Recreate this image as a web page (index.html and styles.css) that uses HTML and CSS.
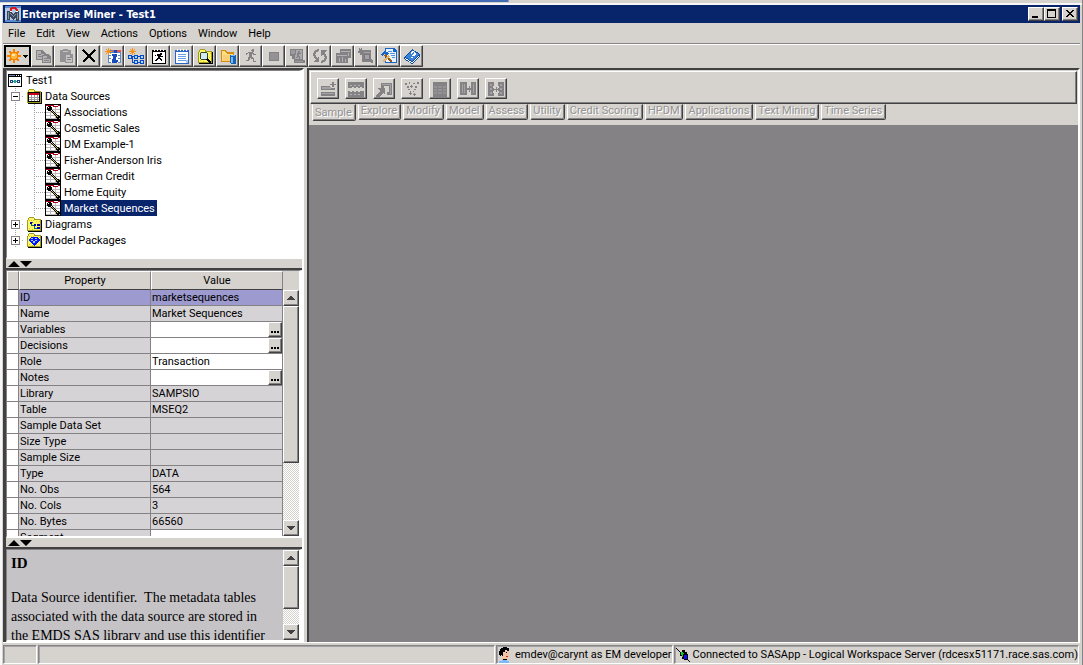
FILE: index.html
```html
<!DOCTYPE html>
<html lang="en">
<head>
<meta charset="utf-8">
<title>Enterprise Miner - Test1</title>
<link rel="stylesheet" href="styles.css">
</head>
<body>
<svg class="defs" aria-hidden="true">
  <symbol id="source" viewBox="0 0 16 16"><path fill="#000" d="M0 0h16v16H0z"/><path fill="#fff" d="M1 1h14v14H1z"/><path fill="#bdbabd" d="M1 5h14v1H1zM1 8h14v1H1zM1 11h14v1H1zM1 14h14v1H1zM5 3h1v12H5zM10 3h1v12h-1z"/><path fill="#b50018" d="M1 1h8v1H1zM8 2h5v1H8zM13 1h2v1h-2z"/><path fill="#000" d="M3 2h3v1h1v3H6v1H3V6H2V3h1zM7 6h1v1h1v1h1v1h1v1h1v1h2v1h1v2h-1v1h-2v-1h-1v-2h-1v-1H9v-1H8V9H7V8H6V7h1z"/><path fill="#fff" d="M3 3h1v1H3z"/><path fill="#cec342" d="M7 7h1v1h1v1h1v1h1v1h1v1h1v1h-1v-1h-1v-1h-1v-1H9v-1H8V8H7z"/></symbol>
  <symbol id="folder" viewBox="0 0 16 16"><path fill="#9c9a21" d="M1 4h1V2h1V1h5v1h1v1h6v1h1v11H1z"/><path fill="#fff763" d="M2 4h1V2h5v2h6v10H2z"/><path fill="#efc321" d="M3 4h1v1H3zM5 4h1v1H5zM7 4h1v1H7zM10 5h1v1h-1zM13 5h1v1h-1zM3 12h1v1H3zM6 13h1v1H6zM10 12h1v1h-1zM12 9h1v1h-1z"/><path d="M15 4h1v12H2v-1h13z"/></symbol>
  <symbol id="up" viewBox="0 0 8 4"><path fill="#424142" d="M3 0h2v1h1v1h1v1h1v1H0V3h1V2h1V1h1z"/></symbol>
  <symbol id="down" viewBox="0 0 8 4"><path fill="#424142" d="M0 0h8v1H7v1H6v1H5v1H3V3H2V2H1V1H0z"/></symbol>
</svg>
<div class="window">
  <div class="backdrop"></div>
  <header class="titlebar">
    <svg class="logo" viewBox="0 0 16 16"><path fill="#b5c7de" d="M0 0h16v16H0z"/><path fill="#5a8ace" d="M0 0h16v2H0zM0 14h16v2H0z"/><path fill="#39455a" d="M2 14V5h3l3 3 3-3h3v10h-3v-4l-3 3-3-3v3z"/><path fill="#8492a5" d="M3 6h1v7H3zM5 7l3 3 3-3v1l-3 3-3-3zM12 7h1v6h-1z"/><path fill="none" stroke="#d61821" stroke-width="2" d="M6 5V3l1-1h3l2 2v2"/><path fill="#fff" d="M5 5h2v1H5zM11 5h2v1h-2z"/></svg>
    <h1>Enterprise Miner - Test1</h1>
    <button class="bevel" aria-label="Minimize"><svg viewBox="0 0 12 10"><path d="M2 7h6v2H2z"/></svg></button>
    <button class="bevel" aria-label="Maximize"><svg viewBox="0 0 12 10"><path fill-rule="evenodd" d="M1 0h9v9H1zM2 2v6h7V2z"/></svg></button>
    <button class="bevel close" aria-label="Close"><svg viewBox="0 0 12 10"><path d="M2 1h2v1h1v1h2V2h1V1h2v1H9v1H8v1H7v1h1v1h1v1h1v1H8V7H7V6H5v1H4v1H2V7h1V6h1V5h1V4H4V3H3V2H2z"/></svg></button>
  </header>
  <nav class="menu">
    <button>File</button><button>Edit</button><button>View</button><button>Actions</button><button>Options</button><button>Window</button><button>Help</button>
  </nav>
  <div class="toolbar">
    <button class="new" aria-label="New"><svg class="wide" viewBox="0 0 23 16"><path fill="#f78200" d="M7 1h2v3h2V3h2v2h-1v2h3v2h-3v2h1v2h-2v-1H9v3H7v-3H5v1H3v-2h1V9H1V7h3V5H3V3h2v1h2z"/><path fill="#ffba42" d="M6 5h4v1h1v4h-1v1H6v-1H5V6h1z"/><path fill="#ffe7ad" d="M6 6h3v2H6z"/><path d="M17 7h5v1h-1v1h-1v1h-1V9h-1V8h-1z"/></svg></button>
    <button class="bevel" disabled aria-label="Copy"><svg viewBox="0 0 16 16"><path fill="#848284" d="M1 2h6l3 3h1v1h2l3 3v6H7v-3H1z"/><path fill="#b5b2b5" d="M2 3h4v3h3v1H7v4H2zM8 8h4v3h3v3H8z"/><path fill="#848284" d="M3 6h3v1H3zM3 8h4v1H3zM9 10h3v1H9zM9 12h5v1H9z"/></svg></button>
    <button class="bevel" disabled aria-label="Paste"><svg viewBox="0 0 16 16"><path fill="#949294" d="M2 2h3V1h5v1h3v4h2v9H7v-1H2z"/><path fill="#c6c3c6" d="M5 3h5v1H5zM8 7h4v3h2v4H8z"/><path fill="#848284" d="M9 9h3v1H9zM9 11h4v1H9z"/></svg></button>
    <button class="bevel" aria-label="Delete"><svg viewBox="0 0 16 16"><path fill="none" stroke="#000" stroke-width="2" d="M2 2l12 12M14 2L2 14"/></svg></button>
    <button class="bevel gap" aria-label="Create data source"><svg viewBox="0 0 16 16"><path fill="#5a8ac6" d="M3 2h13v13H3z"/><path fill="#fff" d="M4 5h2v2H4zM7 5h3v2H7zM12 5h3v2h-3zM4 8h2v2H4zM13 8h2v2h-2zM4 11h2v3H4zM7 11h2v3H7zM13 11h2v3h-2z"/><path fill="#ef5142" d="M8 2h8v2H8z"/><path fill="#fff" d="M6 5h7v10H6z"/><path fill="#1849bd" d="M9 2h3v3H9zM7 6h5l-1 6h2v1l-2 2H7l1-7H7z"/><path fill="#f79218" d="M3 0h1v2h1V1h1v1H5v1h2v1H5v1h1v1H5V5H4v2H3V5H2v1H1V5h1V4H0V3h2V2H1V1h1v1h1z"/></svg></button>
    <button class="bevel" aria-label="Create diagram"><svg viewBox="0 0 16 16"><path fill="#084ac6" d="M0 7h4v4H0zM6 7h4v4H6zM12 7h4v4h-4zM6 12h4v4H6zM12 12h4v4h-4zM4 8h2v1H4zM10 8h2v1h-2zM10 14h2v1h-2zM4 9h1v5h2v1H4z"/><path fill="#b5d7f7" d="M1 8h2v2H1zM7 8h2v2H7zM13 8h2v2h-2zM7 13h2v2H7zM13 13h2v2h-2z"/><path fill="#f79218" d="M4 0h1v2h1V1h1v1H6v1h2v1H6v1h1v1H6V5H5v2H4V5H3v1H2V5h1V4H1V3h2V2H2V1h1v1h1z"/></svg></button>
    <button class="bevel" aria-label="Run status"><svg viewBox="0 0 16 16"><path d="M1 2h14v14H1z"/><path fill="#fff" d="M2 4h12v11H2z"/><path fill="#fff" d="M3 1h1v2H3zM6 1h1v2H6zM9 1h1v2H9zM12 1h1v2h-1z"/><path d="M9 5h2v2H9zM6 6h3v1h1v1h2v1H9v1h1v1h1v2h-1v-1H9v-1H7v1H6v1H4v-1h1v-1h1v-1h1V8H6V7H5v1H4V7h2z"/></svg></button>
    <button class="bevel" aria-label="View log"><svg viewBox="0 0 16 16"><path fill="#2965c6" d="M1 2h14v14H1z"/><path fill="#fff" d="M2 4h12v11H2zM3 1h1v2H3zM6 1h1v2H6zM9 1h1v2H9zM12 1h1v2h-1z"/><path fill="#6ba2e7" d="M4 6h8v1H4zM4 8h8v1H4zM4 10h8v1H4zM4 12h8v1H4z"/><path fill="#a5c7ef" d="M12 12h2v3h-2z"/></svg></button>
    <button class="bevel" aria-label="Explore"><svg viewBox="0 0 16 16"><use href="#folder"/><circle cx="7" cy="8" r="4" fill="#d6ebef" stroke="#294939"/><path stroke="#000" stroke-width="2" d="M10 11l4 4"/></svg></button>
    <button class="bevel" aria-label="Open project"><svg viewBox="0 0 16 16"><path fill="#d68a10" d="M1 2h5l1 2h7v10H1z"/><path fill="#ffdf84" d="M2 3h3l2 3h6v7H2z"/><path fill="#ffcf73" d="M3 7h11v6H3z"/><path fill="#1861b5" d="M10 7h6v8l-1 1h-4l-1-1z"/><path fill="#73bef7" d="M11 7h4v1h-4zM11 9h2v6h-2z"/></svg></button>
    <button class="bevel" disabled aria-label="Run"><svg viewBox="0 0 16 16"><path fill="#848284" d="M9 1h2v3H9V3H8V2h1zM5 4h5v1h1v1h2v1h-3V6H9v3h1v1h1v3h2v1h-3v-3H8v-1H7v2H6v1H3v-1h2V9h1V5H5v1H4v1H3V5h2z"/></svg></button>
    <button class="bevel" disabled aria-label="Stop"><svg viewBox="0 0 16 16"><path fill="#848284" d="M3 4h10v9H3z"/><path fill="#949294" d="M4 5h8v7H4z"/></svg></button>
    <button class="bevel" disabled aria-label="Results"><svg viewBox="0 0 16 16"><path fill="#848284" d="M1 1h13v11h2v3H5v-4H3V8H1z"/><path fill="#adaaad" d="M7 2h6v9H6V7h1z"/><path fill="#848284" d="M9 3h2v2H9zM8 5h4v1h-2v2h1v3h-1V9H9v1H7V9h1z"/><path fill="#9c9a9c" d="M2 2h4v4H2zM6 13h8v1H6z"/></svg></button>
    <button class="bevel" disabled aria-label="Refresh"><svg viewBox="0 0 16 16"><path fill="none" stroke="#848284" stroke-width="2" d="M7 2L4 3 2 6l1 3 3 3M9 14l3-1 2-3-1-3-2-2"/><path fill="#848284" d="M7 8v6H1zM9 2h6L9 8z"/></svg></button>
    <button class="bevel" disabled aria-label="Model comparison"><svg viewBox="0 0 16 16"><path fill="#848284" d="M5 1h11v9h-3v5H1V5h4z"/><path fill="#b5b2b5" d="M6 3h9v1H6zM2 7h10v1H2z"/><path fill="#b5b2b5" d="M4 10h1v4H4zM7 9h1v5H7zM10 11h1v3h-1zM13 5h1v3h-1z"/></svg></button>
    <button class="bevel" disabled aria-label="Find"><svg viewBox="0 0 16 16"><path fill="#848284" d="M1 0h1v1h1V0h1v2h9v9l2 2v2h-2l-1-1H4V7H2V5H0V3h1z"/><path fill="#a5a2a5" d="M6 4h6v1H6zM6 6h2v1H6z"/><circle cx="9" cy="9" r="3" fill="#a5a2a5" stroke="#7b797b"/></svg></button>
    <button class="bevel" aria-label="Options"><svg viewBox="0 0 16 16"><path fill="#1863c6" d="M4 0h9l3 3v12H4z"/><path fill="#e7f3ff" d="M5 1h7v3h3v10H5z"/><path fill="#5292de" d="M7 3h4v1H7zM9 5h5v1H9zM10 7h4v1h-4zM11 9h3v1h-3z"/><path fill="#1863c6" d="M0 6l4-3 4 2-2 2-2-1-3 2z"/><path stroke="#945918" stroke-width="2" d="M4 7l7 7"/><path stroke="#e7b263" stroke-width="2" d="M2 14l6-6"/></svg></button>
    <button class="bevel" aria-label="Help"><svg viewBox="0 0 16 16"><path fill="#10499c" d="M0 9l8-8 8 5v3l-8 7-8-5z"/><path fill="#3982d6" d="M1 9l7-7 7 4-7 7z"/><path fill="#fff" d="M1 10l7 4 7-6v1l-7 6-7-4z"/><path fill="#fff" d="M6 5l3-2 3 2v2L9 8H8V7l2-1V5L9 4 7 6zM7 9h2v1H7z"/></svg></button>
  </div>
  <main class="work">
    <aside class="side">
      <section class="pane tree" aria-label="Project">
        <div class="row root"><svg class="i14" viewBox="0 0 14 14"><path d="M0 1h14v13H0z"/><path fill="#fff" d="M1 4h12v9H1zM8 2h1v1H8zM10 2h1v1h-1zM12 2h1v1h-1z"/><path fill="#5a82bd" d="M1 2h6v1H1z"/><path fill="#184584" d="M2 7h3v3H2zM9 7h3v3H9z"/><path fill="#29a294" d="M5 8h4v1H5zM6 7h2v3H6z"/><path fill="#fff" d="M3 8h1v1H3zM10 8h1v1h-1z"/></svg><span>Test1</span></div>
        <ul class="level1">
          <li><div class="row"><button class="toggle" aria-label="Collapse Data Sources"><svg viewBox="0 0 9 9"><path fill="#848284" d="M0 0h9v9H0z"/><path fill="#fff" d="M1 1h7v7H1z"/><path d="M2 4h5v1H2z"/></svg></button><svg class="i16" viewBox="0 0 16 16"><use href="#folder"/><path d="M2 4h12v10H2z"/><path fill="#fff" d="M3 7h10v6H3z"/><path fill="#c60018" d="M3 5h10v2H3z"/><path fill="#9c9a9c" d="M3 9h10v1H3zM3 11h10v1H3zM5 7h1v6H5zM8 7h1v6H8zM11 7h1v6h-1z"/></svg><span>Data Sources</span></div>
            <ul class="level2">
              <li class="row"><svg class="i16"><use href="#source"/></svg><span>Associations</span></li>
              <li class="row"><svg class="i16"><use href="#source"/></svg><span>Cosmetic Sales</span></li>
              <li class="row"><svg class="i16"><use href="#source"/></svg><span>DM Example-1</span></li>
              <li class="row"><svg class="i16"><use href="#source"/></svg><span>Fisher-Anderson Iris</span></li>
              <li class="row"><svg class="i16"><use href="#source"/></svg><span>German Credit</span></li>
              <li class="row"><svg class="i16"><use href="#source"/></svg><span>Home Equity</span></li>
              <li class="row"><svg class="i16"><use href="#source"/></svg><span class="selected">Market Sequences</span></li>
            </ul>
          </li>
          <li class="row"><button class="toggle" aria-label="Expand Diagrams"><svg viewBox="0 0 9 9"><path fill="#848284" d="M0 0h9v9H0z"/><path fill="#fff" d="M1 1h7v7H1z"/><path d="M2 4h5v1H2zM4 2h1v5H4z"/></svg></button><svg class="i16" viewBox="0 0 16 16"><use href="#folder"/><path fill="#0000ad" d="M4 6h2v2H4zM8 8h2v2H8zM11 8h3v2h-3zM11 11h3v2h-3z"/><path fill="#007573" d="M6 6h1v1H6zM5 8h1v1h2v1H5zM8 10h1v2h2v1H8z"/></svg><span>Diagrams</span></li>
          <li class="row"><button class="toggle" aria-label="Expand Model Packages"><svg viewBox="0 0 9 9"><path fill="#848284" d="M0 0h9v9H0z"/><path fill="#fff" d="M1 1h7v7H1z"/><path d="M2 4h5v1H2zM4 2h1v5H4z"/></svg></button><svg class="i16" viewBox="0 0 16 16"><use href="#folder"/><path fill="#0018ff" d="M5 5h6l3 3-6 6-6-6z"/><path fill="#a5c7ff" d="M5 6h2v1H5zM9 6h2v1H9zM5 8h2v1H5zM9 8h2v1H9zM7 9h2v2H7z"/></svg><span>Model Packages</span></li>
        </ul>
      </section>
      <div class="splitter"><svg viewBox="0 0 24 6"><path d="M0 6l6-6 6 6zM12 0h12l-6 6z"/></svg></div>
      <section class="pane props" aria-label="Properties">
        <div class="clip">
          <table>
            <colgroup><col class="c-mark"><col class="c-name"><col></colgroup>
            <thead><tr><th></th><th>Property</th><th>Value</th></tr></thead>
            <tbody>
              <tr class="current"><td></td><td>ID</td><td>marketsequences</td></tr>
              <tr><td></td><td>Name</td><td>Market Sequences</td></tr>
              <tr class="edit"><td></td><td>Variables</td><td class="act"><button class="bevel more" aria-label="Edit variables"><svg viewBox="0 0 8 2"><path d="M0 0h2v2H0zM3 0h2v2H3zM6 0h2v2H6z"/></svg></button></td></tr>
              <tr class="edit"><td></td><td>Decisions</td><td class="act"><button class="bevel more" aria-label="Edit decisions"><svg viewBox="0 0 8 2"><path d="M0 0h2v2H0zM3 0h2v2H3zM6 0h2v2H6z"/></svg></button></td></tr>
              <tr class="edit"><td></td><td>Role</td><td>Transaction</td></tr>
              <tr class="edit"><td></td><td>Notes</td><td class="act"><button class="bevel more" aria-label="Edit notes"><svg viewBox="0 0 8 2"><path d="M0 0h2v2H0zM3 0h2v2H3zM6 0h2v2H6z"/></svg></button></td></tr>
              <tr><td></td><td>Library</td><td>SAMPSIO</td></tr>
              <tr><td></td><td>Table</td><td>MSEQ2</td></tr>
              <tr><td></td><td>Sample Data Set</td><td></td></tr>
              <tr><td></td><td>Size Type</td><td></td></tr>
              <tr><td></td><td>Sample Size</td><td></td></tr>
              <tr><td></td><td>Type</td><td>DATA</td></tr>
              <tr><td></td><td>No. Obs</td><td>564</td></tr>
              <tr><td></td><td>No. Cols</td><td>3</td></tr>
              <tr><td></td><td>No. Bytes</td><td>66560</td></tr>
              <tr class="edit"><td></td><td>Segment</td><td></td></tr>
            </tbody>
          </table>
        </div>
        <div class="scroll under-head"><button class="bevel" aria-label="Scroll properties up"><svg><use href="#up"/></svg></button><div class="thumb bevel"></div><div class="track"></div><button class="bevel" aria-label="Scroll properties down"><svg><use href="#down"/></svg></button></div>
      </section>
      <div class="splitter"><svg viewBox="0 0 24 6"><path d="M0 6l6-6 6 6zM12 0h12l-6 6z"/></svg></div>
      <section class="pane help" aria-label="Property help">
        <div class="clip"><h2>ID</h2><p>Data Source identifier.&nbsp; The metadata tables associated with the data source are stored in the EMDS SAS library and use this identifier</p></div>
        <div class="scroll"><button class="bevel" aria-label="Scroll help up"><svg><use href="#up"/></svg></button><div class="thumb bevel"></div><div class="track"></div><button class="bevel" aria-label="Scroll help down"><svg><use href="#down"/></svg></button></div>
      </section>
    </aside>
    <section class="desk">
      <div class="palette">
        <div class="nodes">
          <button class="bevel" disabled aria-label="Append"><svg viewBox="0 0 16 16"><path fill="#848284" d="M1 5h9v4H1zM1 11h14v4H1zM10 3h6v1h-6zM12 1h2v5h-2zM10 7h5v2h-5z"/><path fill="#a5a2a5" d="M2 6h9v2H2zM2 12h12v1H2z"/></svg></button>
          <button class="bevel" disabled aria-label="Data Partition"><svg viewBox="0 0 16 16"><path fill="#848284" d="M0 1h16v6h-2V6h-2v1h-2V6H8v1H6V6H4v1H0zM0 10h2v1h2v-1h2v1h2v-1h2v1h2v-1h4v6H0z"/><path fill="#b5b2b5" d="M2 4h2v1H2zM6 4h2v1H6zM10 4h2v1h-2zM2 13h2v1H2zM6 13h2v1H6zM10 13h2v1h-2z"/></svg></button>
          <button class="bevel" disabled aria-label="File Import"><svg viewBox="0 0 16 16"><path fill="#848284" d="M5 2h11v12h-5v-3h2V5H8v3H5z"/><path fill="#a5a2a5" d="M6 3h9v10h-1V4H6z"/><path fill="#848284" d="M2 7h7v7l-2-2-3 4H0v-2l4-4z"/></svg></button>
          <button class="bevel" disabled aria-label="Filter"><svg viewBox="0 0 16 16"><path fill="#848284" d="M1 2h2v2H1zM5 1h1v2H5zM9 2h2v1H9zM13 1h2v2h-2zM3 5h2v2H3zM7 4h1v3H7zM6 5h3v1H6zM11 5h2v2h-2zM4 8h2v1H4zM10 8h2v1h-2zM6 10h1v1H6zM9 10h1v1H9zM5 12h3v1H5zM6 11h1v3H6zM9 13h3v1H9zM10 12h1v3h-1z"/></svg></button>
          <button class="bevel" disabled aria-label="Input Data"><svg viewBox="0 0 16 16"><path fill="#848284" d="M1 1h14v15H1z"/><path fill="#949294" d="M2 5h3v2H2zM6 5h4v2H6zM11 5h3v2h-3zM2 8h3v2H2zM6 8h4v2H6zM11 8h3v2h-3zM2 11h3v2H2zM6 11h4v2H6zM11 11h3v2h-3z"/></svg></button>
          <button class="bevel" disabled aria-label="Merge"><svg viewBox="0 0 16 16"><path fill="#848284" d="M0 1h7v13H0zM11 1h5v13h-5zM7 7h4v2H7zM9 5h1v6H9z"/><path fill="#a5a2a5" d="M2 3h1v9H2zM4 3h1v9H4zM13 3h1v9h-1z"/></svg></button>
          <button class="bevel" disabled aria-label="Sample"><svg viewBox="0 0 16 16"><path fill="#848284" d="M0 1h6v4H5v2h1v3H5v2h1v3H0zM10 1h6v14h-6v-3h1v-2h-1V7h1V5h-1zM5 8h6v1H5zM8 6h1v5H8z"/><path fill="#a5a2a5" d="M2 3h2v2H2zM2 7h2v2H2zM2 11h2v2H2zM12 3h2v2h-2zM12 7h2v2h-2zM12 11h2v2h-2z"/></svg></button>
        </div>
        <div class="tabs" role="tablist">
          <button role="tab" disabled class="active">Sample</button><button role="tab" disabled>Explore</button><button role="tab" disabled>Modify</button><button role="tab" disabled>Model</button><button role="tab" disabled>Assess</button><button role="tab" disabled>Utility</button><button role="tab" disabled>Credit Scoring</button><button role="tab" disabled>HPDM</button><button role="tab" disabled>Applications</button><button role="tab" disabled>Text Mining</button><button role="tab" disabled>Time Series</button>
        </div>
      </div>
      <div class="canvas"></div>
    </section>
  </main>
  <footer class="status">
    <div class="cell small"></div>
    <div class="cell grow"></div>
    <div class="cell user"><svg class="i16" viewBox="0 0 16 16"><path fill="#7bbaff" d="M2 14h3v-2h5v2h2v2H2z"/><path fill="#efc7a5" d="M5 4h7v6h-1v3H5z"/><path d="M3 2h1V1h2V0h4v1h2v3h-2V3H8v2H6v4H5V8H4v1H3V8H2V4h1z"/><path fill="#c63118" d="M9 9h2v1H9z"/><path d="M9 5h1v1H9zM6 12h4v1H6z"/></svg><span>emdev@carynt as EM developer</span></div>
    <div class="cell server"><svg class="i16" viewBox="0 0 16 16"><path stroke="#000" fill="none" d="M1 1l5 5M11 11l4 4"/><path d="M7 3h3v2h2v2h1v6H9v-1H7V9H5V5h2z"/><path fill="#00d721" d="M6 5h2v1h1v1H8v3H7V8H6z"/><path fill="#1010ef" d="M9 8h3v4H9z"/></svg><span>Connected to SASApp - Logical Workspace Server (rdcesx51171.race.sas.com)</span></div>
  </footer>
</div>
</body>
</html>
```
FILE: styles.css
```css
* { box-sizing: border-box; }
body {
  margin: 0;
  background: #d6d3ce;
  color: #000;
  font: 11px/16px Roboto, "Noto Sans", sans-serif;
}
button {
  margin: 0;
  padding: 0;
  border: 0;
  background: #d6d3ce;
  color: inherit;
  font: inherit;
}
h1, h2, p, ul { margin: 0; padding: 0; }
ul { list-style: none; }
svg { display: block; flex: none; shape-rendering: crispEdges; }
.defs { position: absolute; width: 0; height: 0; }
.i16 { width: 16px; height: 16px; }
.i14 { width: 14px; height: 14px; }
.bevel {
  display: flex;
  align-items: center;
  justify-content: center;
  background: #d6d3ce;
  border: 1px solid;
  border-color: #fff #424142 #424142 #fff;
  box-shadow: inset -1px -1px #848284;
}

.window {
  display: flex;
  flex-direction: column;
  height: 100vh;
  padding: 0 2px 0 3px;
  border-right: 1px solid #848284;
  box-shadow: inset 2px 0 #f7f7f7;
}
.backdrop {
  height: 5px;
  margin: 0 -2px 0 -3px;
  background: linear-gradient(#426db5, #426db5) 0 0 / 47% 2px no-repeat, #d6d3ce;
  border-bottom: 2px solid #f7f7f7;
}
.titlebar {
  display: flex;
  align-items: center;
  height: 18px;
  padding: 0 2px;
  background: #08246b;
  color: #fff;
}
.logo { width: 16px; height: 16px; }
.titlebar h1 { flex: 1; padding: 1px 0 0 1px; font: bold 11px/16px "DejaVu Sans Condensed", sans-serif; }
.titlebar button { width: 16px; height: 14px; }
.titlebar button svg { width: 12px; height: 10px; }
.titlebar .close { margin-left: 2px; }

.menu {
  display: flex;
  height: 22px;
  padding: 2px 0;
  border-bottom: 1px solid #fff;
  box-shadow: inset 0 -1px #848284;
}
.menu button { padding: 0 6px 0 5px; line-height: 16px; background: none; }

.toolbar { display: flex; height: 23px; padding: 0 1px; }
.toolbar button { width: 23px; height: 22px; }
.toolbar svg { width: 16px; height: 16px; }
.toolbar .new { width: 27px; border: 2px solid #000; }
.toolbar .new .wide { width: 23px; }
.toolbar .gap { margin-left: 1px; }

.work { display: flex; flex: 1; min-height: 0; }
.side {
  display: flex;
  flex-direction: column;
  width: 301px;
  border-left: 3px solid #424142;
  border-top: 2px solid #424142;
  border-right: 2px solid #fff;
}
.pane { border: 3px solid #fff; border-top-color: #848284; border-left-color: #848284; border-width: 1px 3px 2px 1px; }
.tree { height: 189px; padding: 1px; background: #fff; }
.row { display: flex; align-items: center; height: 16px; white-space: nowrap; }
.row span { padding: 1px 2px 0 3px; line-height: 15px; }
.root span { padding-left: 4px; }
.level1 { margin-left: 7px; background: linear-gradient(#a5a2a5 50%, transparent 0) 0 0 / 1px 2px repeat-y; }
.level1 > li { margin-left: -4px; }
.level1 .row .toggle { width: 9px; height: 9px; margin-right: 6px; background: #fff; box-shadow: 7px 0 0 -4px #a5a2a5; }
.toggle svg { width: 9px; height: 9px; }
.level2 { margin-left: 23px; background: linear-gradient(#a5a2a5 50%, transparent 0) 0 0 / 1px 2px repeat-y; }
.level2 .row {
  padding-left: 11px;
  background: repeating-linear-gradient(90deg, #a5a2a5 0 1px, transparent 1px 2px) 0 8px / 11px 1px no-repeat;
}
.level2 .row .selected { background: #08246b; color: #fff; }

.splitter { display: flex; align-items: center; height: 11px; padding-left: 2px; border-bottom: 2px solid #424142; }
.splitter svg { width: 24px; height: 6px; shape-rendering: auto; }

.props { display: flex; flex: 1; min-height: 0; background: #d6d3ce; }
.clip { flex: 1; min-width: 0; overflow: hidden; }
table { width: 100%; table-layout: fixed; border-collapse: separate; border-spacing: 0; }
.c-mark { width: 12px; }
.c-name { width: 132px; }
th {
  height: 19px;
  padding: 1px 0 0;
  border: 1px solid;
  border-color: #fff #848284 #424142 #fff;
  font-weight: normal;
  line-height: 16px;
}
td {
  height: 16px;
  padding: 1px 1px 0;
  border-right: 1px solid #848284;
  border-bottom: 1px solid #848284;
  background: #d6d3d6;
  line-height: 14px;
}
td:first-child, .edit td:last-child { background: #fff; }
.current td:nth-child(n+2) { background: #9c9ace; }
.act { padding: 0; }
.more { width: 14px; height: 15px; margin-left: auto; padding-top: 5px; }
.more svg { width: 8px; height: 2px; }

.scroll { display: flex; flex-direction: column; width: 16px; background: #d6d3ce; }
.scroll button { height: 16px; }
.scroll svg { width: 8px; height: 4px; }
.track { flex: 1; background: repeating-conic-gradient(#fff 0 25%, #d6d3ce 0 50%) 0 0 / 2px 2px; }
.under-head { padding-top: 19px; }
.under-head .thumb { flex: 0 0 64%; }

.help { display: flex; height: 93px; background: #c6c3c6; font: 14px/19px "Liberation Serif", serif; }
.help h2 { padding: 4px 4px 0; font-size: 15px; line-height: 19px; }
.help p { padding: 15px 14px 0 4px; }
.help .thumb { height: 43px; }

.desk {
  display: flex;
  flex: 1;
  flex-direction: column;
  min-width: 0;
  margin-left: 3px;
  border-left: 2px solid #424142;
  border-top: 2px solid #424142;
  border-right: 2px solid #fff;
}
.palette { height: 55px; padding: 1px 1px 0; }
.nodes {
  display: flex;
  gap: 6px;
  height: 33px;
  padding: 6px 6px 0;
  border: 1px solid;
  border-color: #fff #424142 #424142 #fff;
  box-shadow: inset -1px -1px #848284;
}
.nodes button { width: 22px; height: 21px; }
.nodes svg { width: 16px; height: 16px; }
.tabs { display: flex; align-items: flex-start; gap: 2px; padding-left: 2px; }
.tabs button {
  height: 16px;
  padding: 0 3px 2px 2px;
  border: 1px solid;
  border-color: transparent #424142 #424142 #fff;
  border-radius: 0 0 2px 2px;
  box-shadow: inset -1px -1px #848284;
  color: #949294;
  line-height: 12px;
  text-shadow: 1px 1px #fff;
  white-space: nowrap;
}
.tabs .active { height: 17px; padding-top: 2px; padding-bottom: 1px; }
.canvas { flex: 1; background: #848284; }

.status { display: flex; height: 23px; padding: 2px 0 1px; border-top: 1px solid #fff; }
.cell {
  display: flex;
  align-items: center;
  margin-right: 1px;
  border: 1px solid;
  border-color: #848284 #fff #fff #848284;
  box-shadow: inset 1px 1px #a5a2a5;
  white-space: nowrap;
}
.small { width: 34px; }
.grow { flex: 1; min-width: 0; }
.user span, .server span { padding: 0 0 0 2px; }
```
